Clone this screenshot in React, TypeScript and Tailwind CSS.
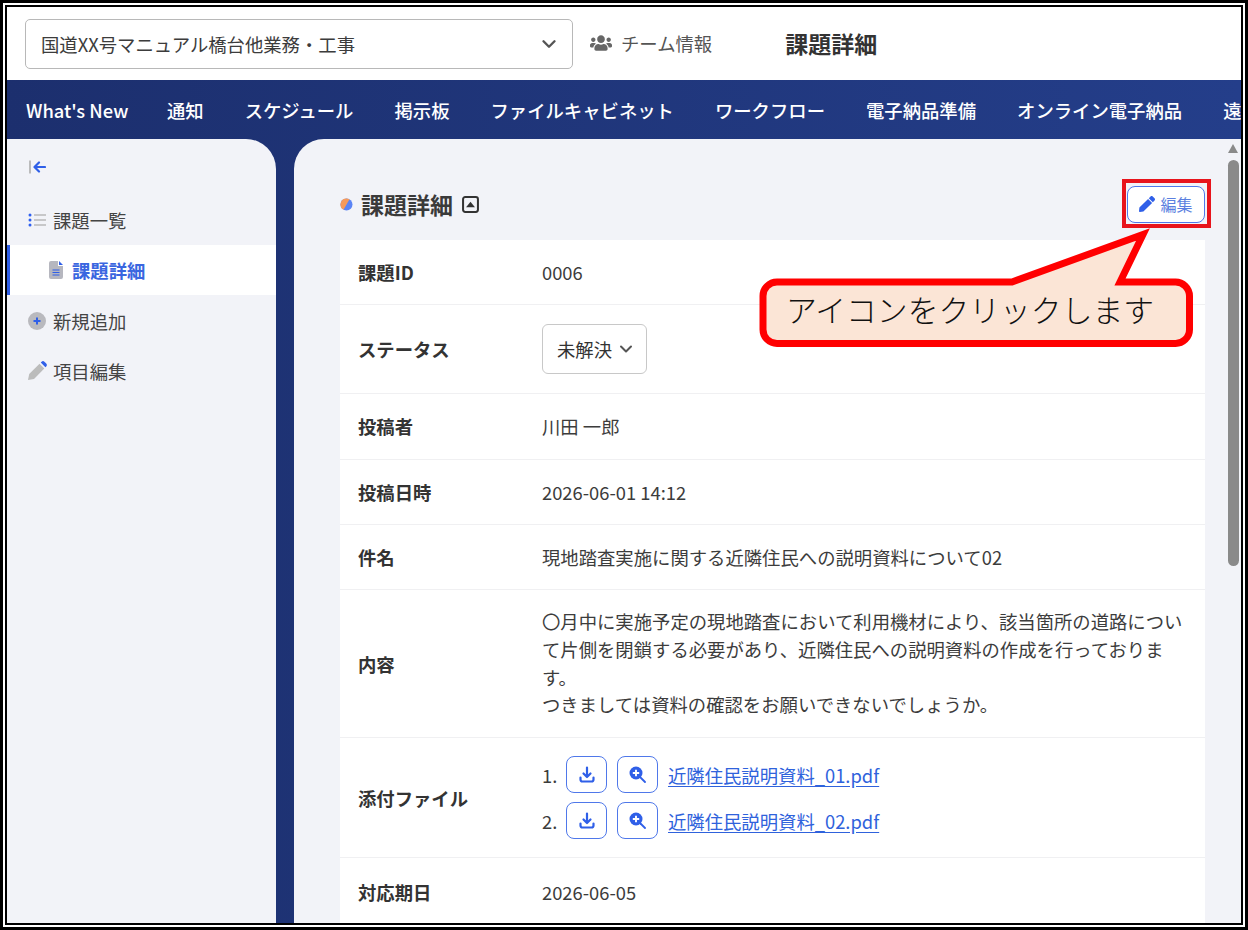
import { FaPen, FaUsers } from "react-icons/fa";
import { FiChevronDown } from "react-icons/fi";

const jp = "font-['Noto_Sans_CJK_JP','Noto_Sans',sans-serif]";

const navItems = ["通知", "スケジュール", "掲示板", "ファイルキャビネット", "ワークフロー", "電子納品準備", "オンライン電子納品", "遠隔臨場"];

const ListIcon = () => (
  <svg width="18" height="16" viewBox="0 0 18 16">
    <circle cx="2" cy="3" r="1.5" fill="#2f5ff0" />
    <circle cx="2" cy="8" r="1.5" fill="#2f5ff0" />
    <circle cx="2" cy="13" r="1.5" fill="#2f5ff0" />
    <path d="M6 3h12M6 8h12M6 13h12" stroke="#b9b9b9" strokeWidth="1.7" />
  </svg>
);

const DownloadIcon = () => (
  <svg width="16" height="17" viewBox="0 0 16 17" fill="none" stroke="#2f5fe8" strokeWidth="2.2" strokeLinecap="round" strokeLinejoin="round">
    <path d="M8 1.5v9M4.5 7.5 8 11l3.5-3.5" />
    <path d="M1.5 11.5v2a2 2 0 0 0 2 2h9a2 2 0 0 0 2-2v-2" />
  </svg>
);

const ZoomIcon = () => (
  <svg width="17" height="17" viewBox="0 0 17 17">
    <circle cx="7" cy="7" r="6.5" fill="#2f5fe8" />
    <path d="M7 3.8v6.4M3.8 7h6.4" stroke="#fff" strokeWidth="1.9" />
    <path d="M11.5 11.5 16 16" stroke="#2f5fe8" strokeWidth="1.8" strokeLinecap="round" />
  </svg>
);

const Row = ({ label, children, h, line = true }: { label: string; children: React.ReactNode; h: string; line?: boolean }) => (
  <div className={`flex items-center ${h} ${line ? "border-b border-[#f0f0f2]" : ""}`}>
    <div className="w-[202px] shrink-0 pl-[18px] font-bold text-[#333]">{label}</div>
    <div className="min-w-0 flex-1 pr-[20px] text-[#3c3c3c]">{children}</div>
  </div>
);

const Attachment = ({ n, name }: { n: number; name: string }) => (
  <div className="flex h-[38px] items-center">
    <span className="w-[24px]">{n}.</span>
    <button className="flex h-[37px] w-[41px] items-center justify-center rounded-[8px] border border-[#4f78ea] bg-white">
      <DownloadIcon />
    </button>
    <button className="ml-[10px] flex h-[37px] w-[41px] items-center justify-center rounded-[8px] border border-[#4f78ea] bg-white">
      <ZoomIcon />
    </button>
    <a className="ml-[10px] text-[#2f62dc] underline underline-offset-[3px]">{name}</a>
  </div>
);

const SideItem = ({ icon, label, extra = "" }: { icon: React.ReactNode; label: string; extra?: string }) => (
  <div className={`flex h-[51px] items-center pl-[21px] text-[#444] ${extra}`}>
    <span className="flex w-[25px] items-center">{icon}</span>
    <span>{label}</span>
  </div>
);

export default function App() {
  return (
    <div className={`${jp} h-[930px] w-[1248px] overflow-hidden border-[3px] border-black bg-white p-[2px] text-[18.35px] leading-[28px]`}>
      <div className="relative flex h-full flex-col overflow-hidden border-2 border-black">
        {/* top bar */}
        <div className="flex h-[73px] shrink-0 items-center pl-[18px]">
          <div className="flex h-[50px] w-[548px] items-center justify-between rounded-[5px] border border-[#b8b8b8] pl-[15px] pr-[12px] text-[#3c3c3c]">
            <span>国道XX号マニュアル橋台他業務・工事</span>
            <FiChevronDown strokeWidth={2.6} className="text-[22px] text-[#555]" />
          </div>
          <FaUsers className="mb-[2px] ml-[17px] text-[22px] text-[#666]" />
          <span className="mb-[2px] ml-[9px] text-[#555]">チーム情報</span>
          <span className="mb-[2px] ml-[73px] text-[23px] font-bold text-[#333]">課題詳細</span>
        </div>

        {/* nav */}
        <div className="flex h-[59px] shrink-0 items-center gap-[41px] overflow-hidden whitespace-nowrap bg-gradient-to-r from-[#1c2f6e] to-[#243e8a] pl-[19px] pt-[1px] font-medium text-white">
          <span className="w-[100px] shrink-0">What's New</span>
          {navItems.map((item) => (
            <span key={item} className="shrink-0">{item}</span>
          ))}
        </div>

        {/* body */}
        <div className="flex min-h-0 flex-1 bg-gradient-to-r from-[#1c2f6e] to-[#243e8a]">
          <aside className="w-[269px] shrink-0 rounded-tr-[30px] bg-[#f2f3f8]">
            <div className="flex h-[55px] items-center pl-[22px] pt-[1px]">
              <svg width="17" height="14" viewBox="0 0 17 14" fill="none">
                <path d="M1 0.5v13" stroke="#b5b5b5" strokeWidth="1.8" />
                <path d="M16 7H6M10 2.5 5.5 7l4.5 4.5" stroke="#2f5fe8" strokeWidth="2.2" strokeLinecap="round" strokeLinejoin="round" />
              </svg>
            </div>
            <SideItem icon={<ListIcon />} label="課題一覧" />
            <div className="flex h-[50px] items-center border-l-[3px] border-[#2f5fe8] bg-white pl-[39px] font-bold text-[#3a66e0]">
              <span className="flex w-[23px] items-center">
                <svg width="14" height="18" viewBox="0 0 14 18">
                  <path d="M2 0h7v5h5v11a2 2 0 0 1-2 2H2a2 2 0 0 1-2-2V2a2 2 0 0 1 2-2z" fill="#b6b7bf" />
                  <path d="M10 0l4 4h-4z" fill="#2f5fe8" />
                  <path d="M3.500 9h7M3.500 11.500h7M3.500 14h7" stroke="#2f5fe8" strokeWidth="1.1" />
                </svg>
              </span>
              <span>課題詳細</span>
            </div>
            <SideItem
              icon={
                <svg width="18" height="18" viewBox="0 0 18 18">
                  <circle cx="9" cy="9" r="9" fill="#b9b9be" />
                  <path d="M5.500 9h7M9 5.500v7" stroke="#2f5fe8" strokeWidth="2" />
                </svg>
              }
              label="新規追加"
            />
            <SideItem
              extra="pb-[2px]"
              icon={
                <svg width="19" height="19" viewBox="0 0 19 19">
                  <path d="M0 19l1.200-6L11.500 2.800l4.800 4.800L6 18z" fill="#bcbcbc" />
                  <path d="M12.800 1.600 13.600.8a2 2 0 0 1 2.800 0l1.800 1.800a2 2 0 0 1 0 2.800l-.8.8z" fill="#2f5fe8" />
                </svg>
              }
              label="項目編集"
            />
          </aside>

          <main className="ml-[18px] flex min-w-0 flex-1 rounded-tl-[30px] bg-[#f2f3f8]">
            <div className="min-w-0 flex-1 pl-[46px] pr-[20px]">
              <div className="flex h-[101px] items-center justify-between pt-[29px]">
                <div className="flex items-center">
                  <svg width="13" height="13" viewBox="0 0 13 13">
                    <circle cx="6.500" cy="6.500" r="6" fill="#5b84f5" />
                    <path d="M6.500.5a6 6 0 0 0-3 11.200 L9.500 1.300A6 6 0 0 0 6.500.5z" fill="#f79a5b" />
                  </svg>
                  <span className="ml-[8px] text-[23px] font-bold text-[#3a3a3a]">課題詳細</span>
                  <svg className="ml-[9px]" width="17" height="17" viewBox="0 0 16 16">
                    <rect x="1" y="1" width="14" height="14" rx="2" fill="none" stroke="#333" strokeWidth="1.9" />
                    <path d="M3.800 10.500 8 5.500l4.200 5z" fill="#333" />
                  </svg>
                </div>
                <button className="flex h-[37px] w-[78px] items-center justify-center rounded-[8px] border border-[#4f78ea] bg-white text-[16px] text-[#5b7fe0]">
                  <FaPen className="mr-[5px] text-[16px] text-[#2f5fe8]" />
                  編集
                </button>
              </div>

              <div className="bg-white">
                <Row label="課題ID" h="h-[65px]">0006</Row>
                <Row label="ステータス" h="h-[89px]">
                  <div className="flex h-[50px] w-[105px] items-center rounded-[6px] border border-[#c8c8c8] pl-[14px] text-[#333]">
                    未解決
                    <FiChevronDown strokeWidth={2.4} className="ml-[4px] text-[20px] text-[#555]" />
                  </div>
                </Row>
                <Row label="投稿者" h="h-[66px] pb-[2px]">川田 一郎</Row>
                <Row label="投稿日時" h="h-[65px]">2026-06-01 14:12</Row>
                <Row label="件名" h="h-[65px]">現地踏査実施に関する近隣住民への説明資料について02</Row>
                <Row label="内容" h="h-[148px]">
                  <p className="leading-[27.6px]">
                    〇月中に実施予定の現地踏査において利用機材により、該当箇所の道路について片側を閉鎖する必要があり、近隣住民への説明資料の作成を行っております。
                    <br />
                    つきましては資料の確認をお願いできないでしょうか。
                  </p>
                </Row>
                <Row label="添付ファイル" h="h-[120px]">
                  <div className="flex flex-col gap-[8px]">
                    <Attachment n={1} name="近隣住民説明資料_01.pdf" />
                    <Attachment n={2} name="近隣住民説明資料_02.pdf" />
                  </div>
                </Row>
                <Row label="対応期日" h="h-[67px]" line={false}>2026-06-05</Row>
              </div>
            </div>

            {/* scrollbar */}
            <div className="flex w-[16px] shrink-0 flex-col items-center bg-[#f2f3f8] pt-[5px]">
              <svg width="10" height="9" viewBox="0 0 10 9">
                <path d="M5 0l5 9H0z" fill="#8a8a8a" />
              </svg>
              <div className="mt-[7px] h-[406px] w-[11px] rounded-full bg-[#8a8a8a]" />
            </div>
          </main>
        </div>

        {/* annotation over the page */}
        <div className="absolute left-[1115px] top-[172px] h-[49px] w-[89px] border-[4px] border-[#e8141c]" />
        <svg className="absolute left-[748px] top-[218px]" width="446" height="126" viewBox="0 0 446 126">
          <path
            d="M24 57H257L388 9.500 L365 57H420a14 14 0 0 1 14.500 14v33.500a14 14 0 0 1-14.500 14H22a14 14 0 0 1-14-14V71a14 14 0 0 1 14-14z"
            fill="#fbe5d6"
            stroke="#ff0000"
            strokeWidth="7"
          />
        </svg>
        <span className="absolute left-[779px] top-[280px] text-[30.8px] font-light leading-[44px] text-[#111]">アイコンをクリックします</span>
      </div>
    </div>
  );
}
